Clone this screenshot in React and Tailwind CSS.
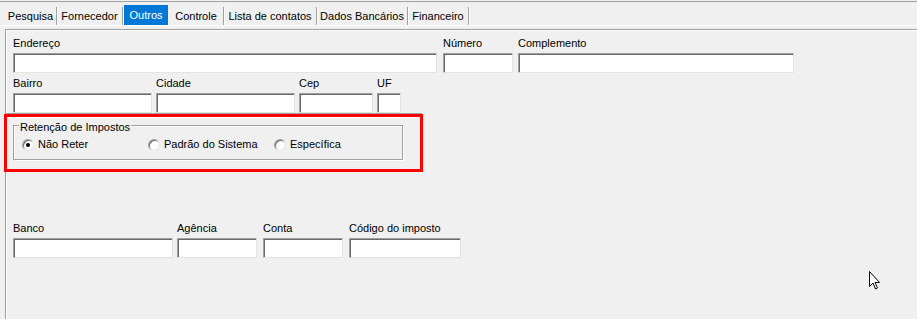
import React from 'react';

const tabs = [
  { label: 'Pesquisa', width: 'w-[52px]' },
  { label: 'Fornecedor', width: 'w-[66px]' },
  { label: 'Outros', width: 'w-[46px]', active: true },
  { label: 'Controle', width: 'w-[55px]' },
  { label: 'Lista de contatos', width: 'w-[93px]' },
  { label: 'Dados Bancários', width: 'w-[91px]' },
  { label: 'Financeiro', width: 'w-[61px]' },
];

function Field({ label, width, className = '' }) {
  return (
    <div className={`flex flex-col ${className}`}>
      <span className="h-[16px] leading-[13px] whitespace-nowrap">{label}</span>
      <div
        className={`${width} h-[20px] bg-white border border-t-[#a0a0a0] border-l-[#a0a0a0] border-r-[#e3e3e3] border-b-[#e3e3e3] shadow-[inset_1px_1px_0_#696969]`}
      />
    </div>
  );
}

function Radio({ label, checked = false, width }) {
  return (
    <div className={`flex items-center h-[13px] ${width}`}>
      <div className="w-[12px] h-[12px] rounded-full bg-white border border-t-[#a0a0a0] border-l-[#a0a0a0] border-r-[#e3e3e3] border-b-[#e3e3e3] shadow-[inset_1px_1px_0_#696969] flex items-center justify-center">
        {checked && <div className="w-[4px] h-[4px] rounded-full bg-black" />}
      </div>
      <span className="ml-[4px] leading-[13px] whitespace-nowrap">{label}</span>
    </div>
  );
}

export default function App() {
  return (
    <div className="relative w-[917px] h-[319px] overflow-hidden bg-[#f0f0f0] text-black text-[11px] font-['Liberation_Sans',Arial,sans-serif] flex flex-col">
      {/* top edge */}
      <div className="mt-px h-px bg-[#a0a0a0]" />

      {/* Tab strip */}
      <div className="mt-[3px] h-[21px] flex pl-[5px] border-b border-white">
        {tabs.map(tab =>
          tab.active ? (
            <div key={tab.label} className={`${tab.width} h-[20px] px-px`}>
              <div className="h-full bg-[#0078d7] text-white flex items-center justify-center leading-[13px]">
                {tab.label}
              </div>
            </div>
          ) : (
            <div
              key={tab.label}
              className={`${tab.width} mt-[2px] h-[18px] border-r border-[#a0a0a0] shadow-[1px_0_0_white] flex items-center justify-center leading-[13px] whitespace-nowrap`}
            >
              {tab.label}
            </div>
          )
        )}
      </div>

      {/* Tab page */}
      <div className="mt-[3px] ml-[5px] flex-1 flex flex-col border-t border-l border-[#a0a0a0] shadow-[inset_1px_1px_0_white]">
        <div className="flex pl-[7px] pt-[7px]">
          <Field label="Endereço" width="w-[424px]" />
          <Field label="Número" width="w-[70px]" className="ml-[6px]" />
          <Field label="Complemento" width="w-[276px]" className="ml-[5px]" />
        </div>

        <div className="flex pl-[7px] mt-[4px]">
          <Field label="Bairro" width="w-[139px]" />
          <Field label="Cidade" width="w-[139px]" className="ml-[4px]" />
          <Field label="Cep" width="w-[74px]" className="ml-[4px]" />
          <Field label="UF" width="w-[24px]" className="ml-[4px]" />
        </div>

        {/* Retenção frame, highlighted */}
        <div className="w-[416px] border-t border-[#a0a0a0]">
          <div className="-ml-[2px] w-[419px] h-[58px] border-[3px] border-[#ff0000]">
            <div className="w-[411px] h-[50px] border-t border-l border-white border-r-[#a0a0a0] border-b-[#a0a0a0]">
              <fieldset className="ml-[5px] w-[390px] border border-[#a0a0a0] shadow-[inset_1px_1px_0_white,1px_1px_0_white] pt-[5px] pb-[8px]">
                <legend className="ml-[5px] px-px pt-[4px] leading-[11px] bg-[#f0f0f0]">Retenção de Impostos</legend>
                <div className="flex pl-[8px]">
                  <Radio label="Não Reter" checked width="w-[126px]" />
                  <Radio label="Padrão do Sistema" width="w-[126px]" />
                  <Radio label="Específica" width="w-[110px]" />
                </div>
              </fieldset>
            </div>
          </div>
        </div>

        <div className="flex pl-[7px] mt-[50px]">
          <Field label="Banco" width="w-[160px]" />
          <Field label="Agência" width="w-[80px]" className="ml-[4px]" />
          <Field label="Conta" width="w-[80px]" className="ml-[6px]" />
          <Field label="Código do imposto" width="w-[112px]" className="ml-[6px]" />
        </div>
      </div>

      {/* mouse pointer */}
      <svg className="absolute left-[868px] top-[270px]" width="14" height="21" viewBox="0 0 14 21">
        <path
          d="M1.5 1.5 L1.5 16.5 L5 13 L7.5 19 L9.5 18 L7 12.5 L11.5 12.5 Z"
          fill="white"
          stroke="black"
          strokeWidth="1"
          strokeLinejoin="miter"
        />
      </svg>
    </div>
  );
}
